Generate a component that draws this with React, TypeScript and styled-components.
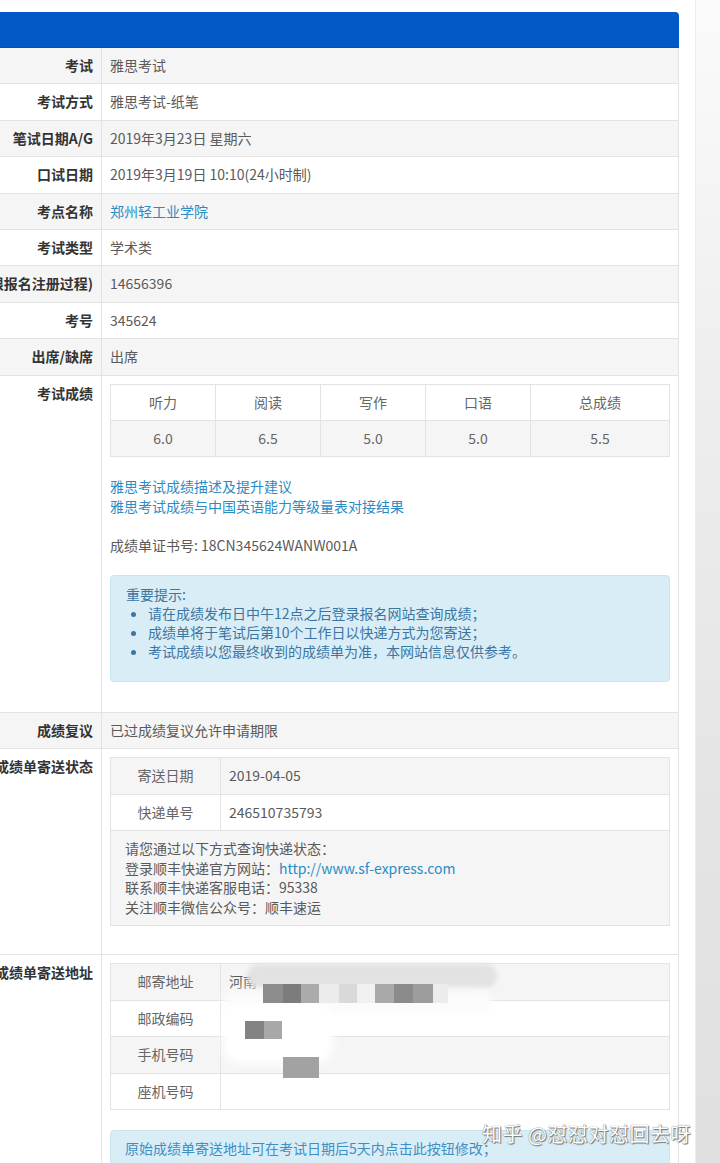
import React from 'react'
import styled, { createGlobalStyle } from 'styled-components'

const GlobalStyle = createGlobalStyle`
    body {
        margin: 0;
        background: #fff;
        font-family: 'Noto Sans CJK SC', 'Noto Sans', sans-serif;
        font-size: 14px;
    }
`

const basicRows = [
    { label: '考试', value: '雅思考试' },
    { label: '考试方式', value: '雅思考试-纸笔' },
    { label: '笔试日期A/G', value: '2019年3月23日 星期六' },
    { label: '口试日期', value: '2019年3月19日 10:10(24小时制)' },
    { label: '考点名称', value: '郑州轻工业学院', link: true },
    { label: '考试类型', value: '学术类' },
    { label: '用户ID(限报名注册过程)', value: '14656396' },
    { label: '考号', value: '345624' },
    { label: '出席/缺席', value: '出席' },
]

const scores = [
    { name: '听力', score: '6.0' },
    { name: '阅读', score: '6.5' },
    { name: '写作', score: '5.0' },
    { name: '口语', score: '5.0' },
    { name: '总成绩', score: '5.5' },
]

const tips = [
    '请在成绩发布日中午12点之后登录报名网站查询成绩；',
    '成绩单将于笔试后第10个工作日以快递方式为您寄送；',
    '考试成绩以您最终收到的成绩单为准，本网站信息仅供参考。',
]

// blurred privacy blocks over the address table (relative to that table)
const smudges = [
    { x: 136, y: 0, w: 250, h: 24, c: '#e2e2e2', r: 12, b: 2 },
    { x: 112, y: 26, w: 270, h: 22, c: '#fbfbfb', r: 12, b: 4 },
    { x: 112, y: 40, w: 110, h: 60, c: '#ffffff', r: 16, b: 5 },
    { x: 152, y: 20, w: 20, h: 19, c: '#8c8c8c', r: 0, b: 0 },
    { x: 172, y: 20, w: 18, h: 19, c: '#7c7c7c', r: 0, b: 0 },
    { x: 190, y: 20, w: 18, h: 19, c: '#ababab', r: 0, b: 0 },
    { x: 208, y: 20, w: 20, h: 19, c: '#ececec', r: 0, b: 0 },
    { x: 228, y: 20, w: 18, h: 19, c: '#d9d9d9', r: 0, b: 0 },
    { x: 246, y: 20, w: 18, h: 19, c: '#f1f1f1', r: 0, b: 0 },
    { x: 264, y: 20, w: 19, h: 19, c: '#a9a9a9', r: 0, b: 0 },
    { x: 283, y: 20, w: 19, h: 19, c: '#8b8b8b', r: 0, b: 0 },
    { x: 302, y: 20, w: 20, h: 19, c: '#9d9d9d', r: 0, b: 0 },
    { x: 322, y: 20, w: 15, h: 19, c: '#ececec', r: 0, b: 0 },
    { x: 134, y: 57, w: 19, h: 18, c: '#838383', r: 0, b: 0 },
    { x: 153, y: 57, w: 18, h: 18, c: '#a8a8a8', r: 0, b: 0 },
    { x: 172, y: 93, w: 36, h: 21, c: '#a2a2a2', r: 0, b: 0 },
]

export default function App() {
    return (
        <>
            <GlobalStyle />
            <Page>
                <Main>
                    <Panel>
                        <PanelHeader />
                        {basicRows.map((row, i) => (
                            <Row key={row.label} $shade={i % 2 === 0}>
                                <Label>{row.label}</Label>
                                <Value>
                                    {row.link ? (
                                        <Link>{row.value}</Link>
                                    ) : (
                                        row.value
                                    )}
                                </Value>
                            </Row>
                        ))}

                        <Row $shade={false}>
                            <Label>考试成绩</Label>
                            <Value>
                                <ScoreTable>
                                    {scores.map((s) => (
                                        <ScoreCell key={s.name} $shade={false}>
                                            {s.name}
                                        </ScoreCell>
                                    ))}
                                    {scores.map((s) => (
                                        <ScoreCell key={s.name + '-v'} $shade>
                                            {s.score}
                                        </ScoreCell>
                                    ))}
                                </ScoreTable>
                                <LinkBlock>
                                    <Link>雅思考试成绩描述及提升建议</Link>
                                    <Link>雅思考试成绩与中国英语能力等级量表对接结果</Link>
                                </LinkBlock>
                                <CertLine>成绩单证书号: 18CN345624WANW001A</CertLine>
                                <Alert>
                                    <div>重要提示:</div>
                                    <TipList>
                                        {tips.map((t) => (
                                            <li key={t}>{t}</li>
                                        ))}
                                    </TipList>
                                </Alert>
                            </Value>
                        </Row>

                        <Row $shade>
                            <Label>成绩复议</Label>
                            <Value>已过成绩复议允许申请期限</Value>
                        </Row>

                        <Row $shade={false}>
                            <Label>成绩单寄送状态</Label>
                            <Value>
                                <InfoTable>
                                    <InfoRow $shade>
                                        <InfoKey>寄送日期</InfoKey>
                                        <InfoValue>2019-04-05</InfoValue>
                                    </InfoRow>
                                    <InfoRow $shade={false}>
                                        <InfoKey>快递单号</InfoKey>
                                        <InfoValue>246510735793</InfoValue>
                                    </InfoRow>
                                    <InfoNote>
                                        <div>请您通过以下方式查询快递状态：</div>
                                        <div>
                                            登录顺丰快递官方网站：
                                            <Link>http://www.sf-express.com</Link>
                                        </div>
                                        <div>联系顺丰快递客服电话：95338</div>
                                        <div>关注顺丰微信公众号：顺丰速运</div>
                                    </InfoNote>
                                </InfoTable>
                            </Value>
                        </Row>

                        <Row $shade={false}>
                            <Label>成绩单寄送地址</Label>
                            <Value>
                                <InfoTable>
                                    <InfoRow $shade>
                                        <InfoKey>邮寄地址</InfoKey>
                                        <InfoValue>河南</InfoValue>
                                    </InfoRow>
                                    <InfoRow $shade={false}>
                                        <InfoKey>邮政编码</InfoKey>
                                        <InfoValue>&nbsp;</InfoValue>
                                    </InfoRow>
                                    <InfoRow $shade>
                                        <InfoKey>手机号码</InfoKey>
                                        <InfoValue>&nbsp;</InfoValue>
                                    </InfoRow>
                                    <InfoRow $shade={false}>
                                        <InfoKey>座机号码</InfoKey>
                                        <InfoValue>&nbsp;</InfoValue>
                                    </InfoRow>
                                    {smudges.map((s, i) => (
                                        <Smudge
                                            key={i}
                                            $x={s.x}
                                            $y={s.y}
                                            $w={s.w}
                                            $h={s.h}
                                            $c={s.c}
                                            $r={s.r}
                                            $b={s.b}
                                        />
                                    ))}
                                </InfoTable>
                                <AddressAlert>
                                    原始成绩单寄送地址可在考试日期后5天内点击此按钮修改；
                                </AddressAlert>
                            </Value>
                        </Row>
                    </Panel>
                </Main>
                <Gutter />
                <Watermark>知乎 @怼怼对怼回去呀</Watermark>
            </Page>
        </>
    )
}

const Page = styled.div`
    position: relative;
    display: flex;
    width: 720px;
    height: 1163px;
    overflow: hidden;
    background: #fff;
`

const Main = styled.div`
    width: 695px;
    flex: none;
    padding-top: 12px;
    overflow: hidden;
`

const Gutter = styled.div`
    flex: 1;
    border-left: 1px solid #ececec;
    background: linear-gradient(to bottom, #fbfbfb 0%, #ededed 35%, #e4e4e4 70%, #e0e0e0 100%);
`

const Panel = styled.div`
    width: 719px;
    margin-left: -40px;
`

const PanelHeader = styled.div`
    height: 35px;
    background: #0259c6;
    border-bottom: 1px solid #0b4fa6;
    border-radius: 4px 4px 0 0;
`

const Row = styled.div<{ $shade: boolean }>`
    display: grid;
    grid-template-columns: 142px 1fr;
    background: ${(p) => (p.$shade ? '#f5f5f5' : '#fff')};
    border-bottom: 1px solid #e3e3e3;
    border-right: 1px solid #e3e3e3;
`

const Label = styled.div`
    display: flex;
    justify-content: flex-end;
    overflow: hidden;
    white-space: nowrap;
    padding: 8px;
    line-height: 19.4px;
    font-weight: 700;
    color: #333;
    border-right: 1px solid #e3e3e3;
`

const Value = styled.div`
    padding: 8px;
    line-height: 19.4px;
    color: #5a5a5a;
    min-width: 0;
`

const Link = styled.span`
    color: #2a8cc5;
`

const ScoreTable = styled.div`
    display: grid;
    grid-template-columns: 105px 105px 105px 105px 1fr;
    border-top: 1px solid #e3e3e3;
    border-left: 1px solid #e3e3e3;
    margin-bottom: 20px;
`

const ScoreCell = styled.div<{ $shade: boolean }>`
    padding: 8px;
    text-align: center;
    line-height: 19.4px;
    color: #666;
    background: ${(p) => (p.$shade ? '#f5f5f5' : '#fff')};
    border-right: 1px solid #e3e3e3;
    border-bottom: 1px solid #e3e3e3;
`

const LinkBlock = styled.div`
    display: flex;
    flex-direction: column;
    margin-bottom: 19.4px;
`

const CertLine = styled.div`
    margin-bottom: 20px;
`

const Alert = styled.div`
    background: #d9edf7;
    border: 1px solid #c8e5f2;
    border-radius: 4px;
    padding: 9px 15px 20px;
    line-height: 19px;
    color: #3b76a3;
    margin-bottom: 22px;
`

const TipList = styled.ul`
    margin: 0;
    padding-left: 22px;
    list-style: disc;
`

const InfoTable = styled.div`
    position: relative;
    border: 1px solid #e3e3e3;
    border-bottom: none;
    margin-bottom: 20px;
`

const InfoRow = styled.div<{ $shade: boolean }>`
    display: grid;
    grid-template-columns: 110px 1fr;
    background: ${(p) => (p.$shade ? '#f5f5f5' : '#fff')};
    border-bottom: 1px solid #e3e3e3;
`

const InfoKey = styled.div`
    padding: 8px;
    line-height: 19.4px;
    text-align: center;
    color: #666;
    border-right: 1px solid #e3e3e3;
`

const InfoValue = styled.div`
    padding: 8px;
    line-height: 19.4px;
`

const InfoNote = styled.div`
    background: #f5f5f5;
    padding: 8px 14px;
    line-height: 19.5px;
    border-bottom: 1px solid #e3e3e3;
`

const Smudge = styled.div<{
    $x: number
    $y: number
    $w: number
    $h: number
    $c: string
    $r: number
    $b: number
}>`
    position: absolute;
    left: ${(p) => p.$x}px;
    top: ${(p) => p.$y}px;
    width: ${(p) => p.$w}px;
    height: ${(p) => p.$h}px;
    background: ${(p) => p.$c};
    border-radius: ${(p) => p.$r}px;
    filter: blur(${(p) => p.$b}px);
`

const AddressAlert = styled.div`
    background: #d9edf7;
    border: 1px solid #c8e5f2;
    border-radius: 4px;
    padding: 8px 14px;
    line-height: 19px;
    color: #3f8fc2;
    height: 60px;
`

const Watermark = styled.div`
    position: absolute;
    left: 482px;
    top: 1119px;
    font-size: 20px;
    letter-spacing: 0.5px;
    color: #fff;
    white-space: nowrap;
    text-shadow: 0 0 1px #555, 1px 1px 1px #777;
`
